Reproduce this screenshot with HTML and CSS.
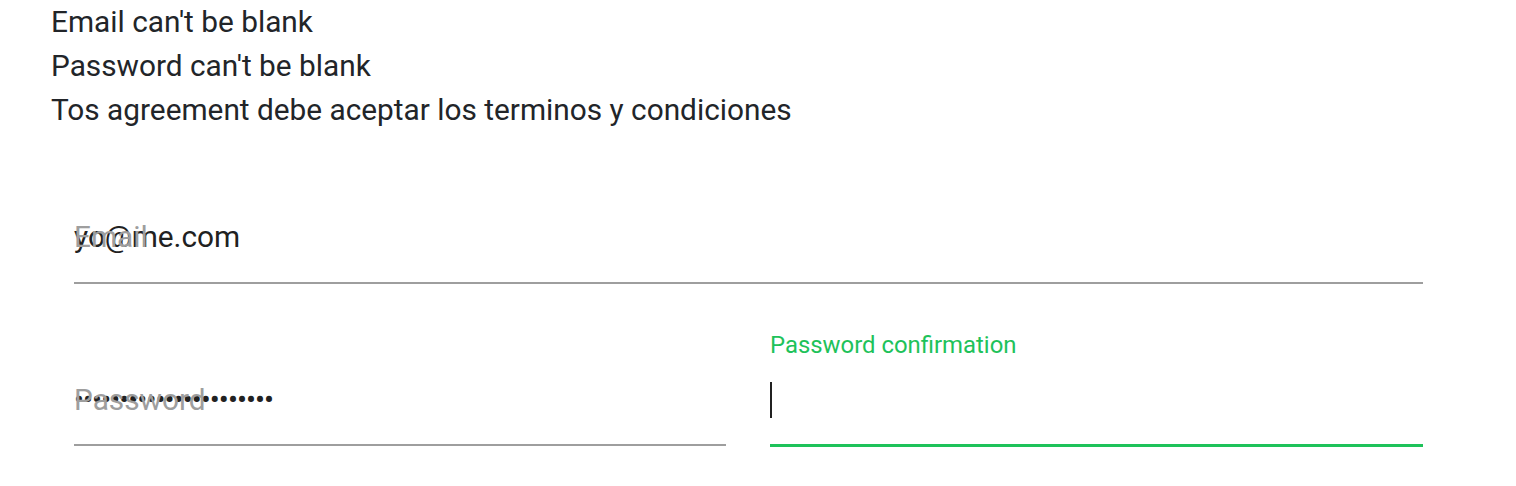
FILE: index.html
```html
<!DOCTYPE html>
<html>
<head>
<meta charset="utf-8">
<link rel="stylesheet" href="styles.css">
</head>
<body>
<div class="errors">
  <div class="err">Email can't be blank</div>
  <div class="err">Password can't be blank</div>
  <div class="err">Tos agreement debe aceptar los terminos y condiciones</div>
</div>
<form class="form">
  <div class="field email">
    <div class="value">yo@me.com</div>
    <label class="label">Email</label>
  </div>
  <div class="row">
    <div class="field">
      <div class="value dots">••••••••••••••••••••••</div>
      <label class="label">Password</label>
    </div>
    <div class="field focus">
      <label class="label small">Password confirmation</label>
      <div class="value"><span class="caret"></span></div>
    </div>
  </div>
</form>
</body>
</html>
```
FILE: styles.css
```css
* { box-sizing: border-box; }
body {
  margin: 0;
  background: #fff;
  font-family: Roboto, "Liberation Sans", sans-serif;
  color: #212121;
}
.errors {
  padding-left: 51px;
}
.err {
  font-size: 29.8px;
  line-height: 44px;
  color: #222529;
}
.form {
  padding: 87px 93px 0 74px;
}
.field {
  position: relative;
  border-bottom: 2px solid #9e9e9e;
  padding-bottom: 27px;
}
.value {
  font-size: 29.8px;
  line-height: 36px;
  height: 36px;
  color: #212121;
  white-space: nowrap;
}
.label {
  position: absolute;
  left: 0;
  font-size: 29.8px;
  line-height: 36px;
  color: #9e9e9e;
}
.email .label { top: 0; }
.row {
  display: grid;
  grid-template-columns: 652px 653px;
  column-gap: 44px;
  align-items: start;
}
.row .field {
  padding-top: 98px;
  padding-bottom: 26px;
}
.row .field .label { top: 98px; }
.dots { letter-spacing: -1px; }
.field.focus { border-bottom: 3px solid #1ec25a; }
.row .field .label.small {
  top: 47px;
  font-size: 23.9px;
  line-height: 28px;
  color: #1ec25a;
}
.caret {
  display: block;
  width: 2px;
  height: 36px;
  background: #212121;
}
```
